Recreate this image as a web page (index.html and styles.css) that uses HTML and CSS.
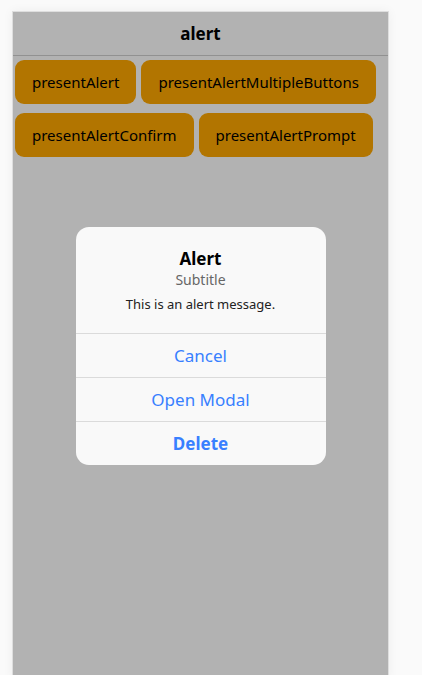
FILE: index.html
```html
<!DOCTYPE html>
<html lang="en">
<head>
<meta charset="utf-8">
<title>alert</title>
<link rel="stylesheet" href="styles.css">
</head>
<body>
<div class="device">
  <header class="toolbar">
    <h1 class="toolbar-title">alert</h1>
  </header>
  <main class="content">
    <button class="btn">presentAlert</button>
    <button class="btn">presentAlertMultipleButtons</button>
    <button class="btn">presentAlertConfirm</button>
    <button class="btn">presentAlertPrompt</button>
  </main>
  <div class="backdrop"></div>
  <div class="alert-layer">
    <div class="alert" role="alertdialog">
      <div class="alert-head">
        <h2 class="alert-title">Alert</h2>
        <h3 class="alert-subtitle">Subtitle</h3>
      </div>
      <div class="alert-message">This is an alert message.</div>
      <div class="alert-buttons">
        <button class="alert-btn">Cancel</button>
        <button class="alert-btn">Open Modal</button>
        <button class="alert-btn alert-btn-strong">Delete</button>
      </div>
    </div>
  </div>
</div>
</body>
</html>
```
FILE: styles.css
```css
html, body {
  margin: 0;
  padding: 0;
  overflow: hidden;
}
body {
  background: #fafafa;
  font-family: "Noto Sans", "Open Sans", sans-serif;
  padding: 11px 0 0 12px;
}
.device {
  position: relative;
  width: 375px;
  height: 667px;
  border: 1px solid #dedede;
  background: #ffffff;
  box-shadow: 0 0 10px rgba(0, 0, 0, 0.05);
  overflow: hidden;
}
.toolbar {
  height: 43px;
  border-bottom: 1px solid #d0d0d0;
  display: flex;
  align-items: center;
  justify-content: center;
  background: #ffffff;
}
.toolbar-title {
  margin: 0;
  font-size: 17px;
  font-weight: 700;
  color: #000;
  line-height: 22px;
}
.content {
  display: flex;
  flex-wrap: wrap;
  column-gap: 5px;
  row-gap: 9px;
  padding: 4px 2px;
}
.btn {
  height: 44px;
  padding: 0 17px;
  border: none;
  border-radius: 9px;
  background: #ffa800;
  color: #000;
  font-family: inherit;
  font-size: 15px;
  line-height: 20px;
}
.backdrop {
  position: absolute;
  inset: 0;
  background: rgba(0, 0, 0, 0.3);
}
.alert-layer {
  position: absolute;
  inset: 0;
  padding-top: 1px;
  display: flex;
  align-items: center;
  justify-content: center;
}
.alert {
  width: 250px;
  background: #f9f9f9;
  border-radius: 13px;
  overflow: hidden;
  text-align: center;
}
.alert-head {
  padding: 21px 16px 0;
}
.alert-title {
  margin: 0;
  font-size: 17px;
  font-weight: 700;
  line-height: 22px;
  color: #000;
}
.alert-subtitle {
  margin: 1px 0 0;
  font-size: 14px;
  font-weight: 400;
  line-height: 18px;
  color: #666;
}
.alert-message {
  padding: 6px 16px 20px;
  font-size: 13px;
  line-height: 18px;
  color: #222;
}
.alert-buttons {
  display: flex;
  flex-direction: column;
}
.alert-btn {
  height: 44px;
  border: none;
  border-top: 1px solid #dbdbdb;
  background: transparent;
  color: #3880ff;
  font-family: inherit;
  font-size: 17px;
  padding: 0 8px;
}
.alert-btn-strong {
  font-weight: 700;
}
```
